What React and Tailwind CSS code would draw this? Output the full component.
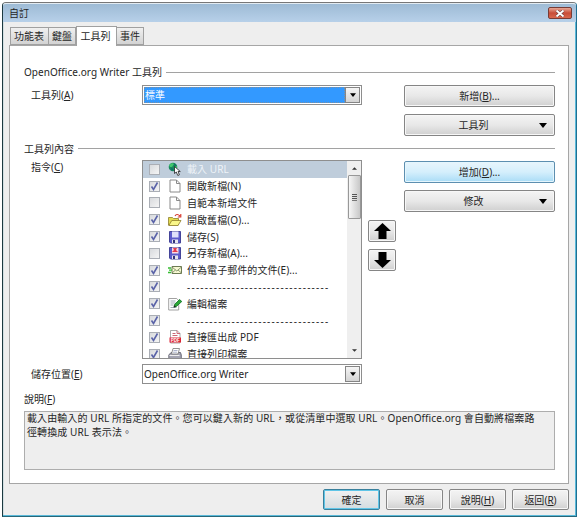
import React from 'react';

const raised = 'border border-[#858585] rounded-[2px] bg-linear-to-b from-[#f4f4f4] via-[#e8e8e8] via-50% to-[#d0d0d0] shadow-[inset_0_0_0_1px_#f7f7f7]';

function Key({ children }) {
  return <>(<span className="underline underline-offset-1">{children}</span>)</>;
}

function Heading({ children, className }) {
  return (
    <div className={'flex items-center gap-1 ' + className}>
      <span>{children}</span>
      <span className="h-px flex-1 bg-[#a2a2a2]" />
    </div>
  );
}

function Down({ className = 'w-[9px] h-[5px]' }) {
  return <svg className={className} viewBox="0 0 8 5"><path d="M0 0h8L4 5z" fill="#000" /></svg>;
}

function Combo({ selected, children }) {
  return (
    <div className="flex h-[20px] w-[220px] border border-[#8e8e8e] bg-white p-px">
      <div className={'flex flex-1 items-center ' + (selected ? 'border border-dotted border-[#7f8f9f] bg-[#3399ff] text-white' : '')}>{children}</div>
      <div className="flex w-[15px] items-center justify-center border border-[#858585] bg-linear-to-b from-[#f5f5f5] to-[#d4d4d4]">
        <Down className="h-[4px] w-[6px]" />
      </div>
    </div>
  );
}

function Wide({ children, menu, hot }) {
  return (
    <div className={'flex h-[22px] w-[151px] items-center justify-center ' + (hot ? 'rounded-[2px] border border-[#5d8fb0] bg-linear-to-b from-[#e8f5fc] via-[#d5effc] via-50% to-[#a9dcf6] shadow-[inset_0_0_0_1px_#e5f6fd]' : raised)}>
      <span className={menu ? 'ml-[13px] flex-1 text-center' : ''}>{children}</span>
      {menu && <Down className="mr-[7px] ml-[10px] h-[5px] w-[8px]" />}
    </div>
  );
}

function Icon({ kind }) {
  const svg = (body) => <svg className="h-[14px] w-[14px] shrink-0" viewBox="0 0 14 14">{body}</svg>;
  switch (kind) {
    case 'globe':
      return svg(<>
        <circle cx="5" cy="5" r="4.300" fill="#178a5d" />
        <path d="M1 3l3-2 2 1-2 3H2zM6 5l3-1v3L7 9z" fill="#43c66d" />
        <path d="M3 6l2 1-1 2zM6 2l2 1-1 1z" fill="#155b79" />
        <path d="M6.500 4.500v7l1.800-1.500 1.500 3.500 1.600-.7-1.400-3.300h2.300z" fill="#fff" stroke="#222" strokeWidth=".8" />
      </>);
    case 'page':
      return svg(<path d="M2 1h6.500l3.500 3.500V13H2zM8.500 1v3.500H12" fill="#fff" stroke="#8a8a8a" strokeWidth="1" />);
    case 'open':
      return svg(<>
        <path d="M.5 12V4.500h4l1 1h5V12z" fill="#e4dc4c" stroke="#8e7e2c" strokeWidth=".8" />
        <path d="M.8 12.500l3-5H13l-3 5z" fill="#f9f78a" stroke="#8e7e2c" strokeWidth=".8" />
        <path d="M7 3c1-2 3-2 5 0M12.800 1v3h-3" fill="none" stroke="#d53429" strokeWidth="1.100" />
      </>);
    case 'save':
    case 'saveas':
      return svg(<>
        <path d="M1.500 1.500h11v11.500H2.500l-1-1z" fill="#5c5ccb" stroke="#444499" />
        <path d="M4 1.500h6.500v6H4z" fill={kind === 'save' ? '#dfe2fa' : '#fbd9df'} />
        {kind === 'saveas' && <path d="M5 2h4l-1 2 2 2H4l2-2z" fill="#e53b4d" />}
        <path d="M4 9.500h6V13H4z" fill="#e6e6ee" />
        <path d="M5 10h2v3H5z" fill="#333379" />
      </>);
    case 'mail':
      return svg(<>
        <path d="M4 3.500h9.500v7H4z" fill="#f8f9d3" stroke="#6d7b53" />
        <path d="M4 4l4.800 4 4.700-4M4 10l3.500-3M13.500 10L10 7" fill="none" stroke="#70815a" strokeWidth=".8" />
        <path d="M0 5h3M1 7.200h3M0 9.500h3" stroke="#37bd32" strokeWidth="1.300" />
      </>);
    case 'edit':
      return svg(<>
        <path d="M.7 1.500h8l2 2V13H.7z" fill="#fff" stroke="#8a8a8a" strokeWidth=".8" />
        <path d="M2.500 4h5M2.500 6h5M2.500 8h3M2.500 10.500h6" stroke="#8795a5" strokeWidth=".8" />
        <path d="M6 10l.6-2.500L11.500 2.500l2.300 2L8.300 9.500z" fill="#2aa837" stroke="#16772b" strokeWidth=".9" />
        <path d="M5.500 10.700l1-2.500 1.500 1.400z" fill="#222" />
      </>);
    case 'pdf':
      return svg(<>
        <path d="M2.500.5h6.500L12 3.500V13H2.500z" fill="#fff" stroke="#939393" strokeWidth=".8" />
        <path d="M9 .5v3h3M4.500 3.500h3M4.500 5.500h5" fill="none" stroke="#cc6874" />
        <path d="M1.500 7.500h11.500v5H1.500z" fill="#dd2434" />
        <text x="7.200" y="11.600" textAnchor="middle" fontSize="4.500" fontWeight="bold" fontFamily="Liberation Sans, sans-serif" fill="#fff">PDF</text>
      </>);
    case 'print':
      return svg(<>
        <path d="M.8 8l2.200-2.500h9.500L13.300 8v4l-1 1.500H.8z" fill="#a5a5b3" stroke="#555565" strokeWidth=".8" />
        <path d="M5 1.500h6.500L10 7H3.500z" fill="#fff" stroke="#777" strokeWidth=".8" />
        <path d="M5.500 3.500h4M5 5.200h4" stroke="#8a93b5" strokeWidth=".7" />
        <path d="M1.500 8.500h10" stroke="#eee" />
      </>);
    default:
      return <span className="w-[14px]" />;
  }
}

const dashes = '--------------------------------';
const commands = [
  [false, 'globe', '載入 URL'],
  [true, 'page', '開啟新檔(N)'],
  [false, 'page', '自範本新增文件'],
  [true, 'open', '開啟舊檔(O)...'],
  [true, 'save', '儲存(S)'],
  [false, 'saveas', '另存新檔(A)...'],
  [true, 'mail', '作為電子郵件的文件(E)...'],
  [true, '', dashes],
  [true, 'edit', '編輯檔案'],
  [true, '', dashes],
  [true, 'pdf', '直接匯出成 PDF'],
  [true, 'print', '直接列印檔案'],
];

function CommandList() {
  return (
    <div className="flex h-[199px] w-[220px] overflow-hidden border border-[#8e8e8e] bg-white">
      <div className="flex-1 overflow-hidden">
        {commands.map(([on, icon, label], i) => (
          <div key={i} className={'flex h-[16.8px] items-center pl-[6px] ' + (i === 0 ? 'bg-[#bfcddb] text-[#eef3f8]' : '')}>
            <span className="mr-[8px] flex h-[11px] w-[11px] shrink-0 items-center justify-center border border-[#aaaeb5] bg-linear-to-br from-[#d8dadd] to-[#f5f5f5]">
              {on && <svg className="h-[9px] w-[9px]" viewBox="0 0 9 9"><path d="M1.500 4.500l2 3 4-7" fill="none" stroke="#5a63a8" strokeWidth="1.600" /></svg>}
            </span>
            <Icon kind={icon} />
            <span className={'ml-[5px] whitespace-nowrap ' + (label === dashes ? 'tracking-[1.230px]' : 'tracking-[0.06px]')}>{label}</span>
          </div>
        ))}
      </div>
      <div className="flex w-[14px] flex-col items-center bg-[#efefef]">
        <svg className="mt-[6px] mb-[5px] h-[3px] w-[5px] shrink-0" viewBox="0 0 6 3"><path d="M0 3L3 0l3 3z" fill="#333" /></svg>
        <div className="flex h-[44px] w-[13px] shrink-0 flex-col items-center justify-center gap-px rounded-[1px] border border-[#989898] bg-linear-to-r from-[#f6f6f6] to-[#c8c8c8]">
          <span className="h-px w-[5px] bg-[#555]" />
          <span className="h-px w-[5px] bg-[#555]" />
          <span className="h-px w-[5px] bg-[#555]" />
          <span className="h-px w-[5px] bg-[#777]" />
        </div>
        <svg className="mt-auto mb-[6px] h-[3px] w-[5px]" viewBox="0 0 6 3"><path d="M0 0h6L3 3z" fill="#333" /></svg>
      </div>
    </div>
  );
}

function Arrow({ flip }) {
  return (
    <div className={'flex h-[22px] w-[28px] items-center justify-center ' + raised}>
      <svg className={'h-[16px] w-[17px] ' + (flip ? 'rotate-180' : '')} viewBox="0 0 17 16"><path d="M8.500 0L17 8h-4.500v8h-8V8H0z" fill="#000" /></svg>
    </div>
  );
}

function Tab({ children, className }) {
  return <div className={'flex h-[18px] items-center justify-center border border-[#a0a0a0] bg-linear-to-b from-[#f0f0f0] to-[#d3d3d3] whitespace-nowrap ' + className}>{children}</div>;
}

export default function App() {
  return (
    <div className="h-[521px] w-[577px] bg-white pt-[2px] pl-[2px] text-[10px] leading-[14px] text-[#262626] [font-family:'Noto_Sans','Noto_Sans_CJK_TC',sans-serif]">
      <div className="flex h-[515px] w-[575px] flex-col rounded-t-[4px] border border-t-[#777] border-r-[#216f91] border-b-[#286677] border-l-[#1c3940] bg-[#eee] shadow-[inset_-1px_-1px_0_#59b9d9,inset_1px_0_0_#d3dfe2]">
        <div className="flex h-[19px] shrink-0 items-center rounded-t-[3px] border-t border-[#e2ebf2] bg-linear-to-b from-[#9ebbd5] to-[#b7d0e9] pr-[4px] pl-[6px]">
          <span className="flex-1">自訂</span>
          <div className="flex h-[12px] w-[24px] items-center justify-center rounded-[2px] border border-[#783c36] bg-linear-to-b from-[#e5a695] via-[#c84c38] via-50% to-[#d9674d]">
            <svg className="h-[7px] w-[10px]" viewBox="0 0 10 7"><path d="M1.500.5l7 6M8.500.5l-7 6" stroke="#6d4141" strokeWidth="3" /><path d="M1.500.5l7 6M8.500.5l-7 6" stroke="#fff" strokeWidth="1.900" /></svg>
          </div>
        </div>
        <div className="flex h-[23px] shrink-0 items-end pl-[7px]">
          <Tab className="w-[39px] pr-px">功能表</Tab>
          <Tab className="w-[27px] border-l-0">鍵盤</Tab>
          <div className="relative z-10 -mb-px flex h-[20px] w-[41px] items-center justify-center border border-b-0 border-[#a0a0a0] bg-white pr-[2px] pb-[2px]">工具列</div>
          <Tab className="w-[27px] border-l-0">事件</Tab>
        </div>
        <div className="ml-[6px] h-[439px] w-[560px] shrink-0 border border-[#a6a6a6] bg-white pt-[16px] pl-[14px]">
          <Heading className="h-[20px] w-[531px] tracking-[0.05px]">OpenOffice.org Writer 工具列</Heading>
          <div className="flex h-[57px] pt-[3px] pl-[7px]">
            <div className="w-[111px] pt-[3px]">工具列<Key>A</Key></div>
            <Combo selected>標準</Combo>
            <div className="ml-[42px] flex flex-col gap-[7px]">
              <Wide>新增<Key>B</Key>...</Wide>
              <Wide menu>工具列</Wide>
            </div>
          </div>
          <Heading className="h-[19px] w-[531px]">工具列內容</Heading>
          <div className="flex h-[229px] pt-[2px] pl-[7px]">
            <div className="w-[111px]">
              <div className="h-[207px]">指令<Key>C</Key></div>
              <div>儲存位置<Key>E</Key></div>
            </div>
            <div className="flex flex-col gap-[5px]">
              <CommandList />
              <Combo>OpenOffice.org Writer</Combo>
            </div>
            <div className="ml-[6px] flex w-[28px] flex-col gap-[7px] pt-[60px]">
              <Arrow />
              <Arrow flip />
            </div>
            <div className="ml-[8px] flex flex-col gap-[7px] pt-px">
              <Wide hot>增加<Key>D</Key>...</Wide>
              <Wide menu>修改</Wide>
            </div>
          </div>
          <div className="h-[24px] pt-[5px]">說明<Key>F</Key></div>
          <div className="h-[59px] w-[531px] border border-[#adadad] bg-[#eee] pl-[2px] leading-[13.5px] tracking-[0.09px] whitespace-nowrap">
            載入由輸入的 URL 所指定的文件。您可以鍵入新的 URL，或從清單中選取 URL。OpenOffice.org 會自動將檔案路<br />徑轉換成 URL 表示法。
          </div>
        </div>
        <div className="flex justify-end gap-[6px] pt-[5px] pr-[7px]">
          <div className={'flex h-[21px] w-[57px] items-center justify-center rounded-[2px] border border-[#397f9b] bg-linear-to-b from-[#f1f1f1] to-[#d3dce0] shadow-[inset_0_0_0_1px_#5fc5e7]'}>確定</div>
          <div className={'flex h-[21px] w-[57px] items-center justify-center ' + raised}>取消</div>
          <div className={'flex h-[21px] w-[57px] items-center justify-center ' + raised}>說明<Key>H</Key></div>
          <div className={'flex h-[21px] w-[57px] items-center justify-center ' + raised}>返回<Key>R</Key></div>
        </div>
      </div>
    </div>
  );
}
